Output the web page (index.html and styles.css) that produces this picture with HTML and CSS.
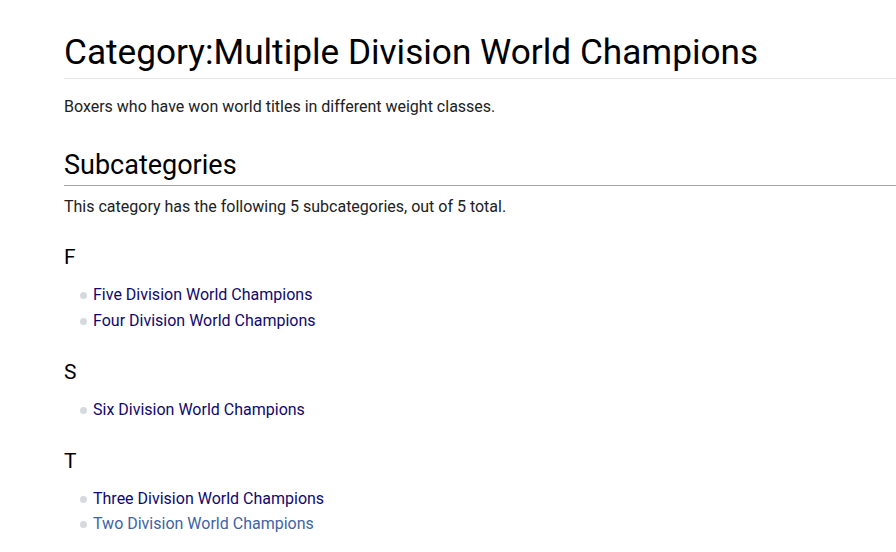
FILE: index.html
```html
<!DOCTYPE html>
<html lang="en">
<head>
<meta charset="utf-8">
<title>Category:Multiple Division World Champions</title>
<link rel="stylesheet" href="styles.css">
</head>
<body>
<main class="page">
  <h1 class="title">Category:Multiple Division World Champions</h1>
  <p class="desc">Boxers who have won world titles in different weight classes.</p>
  <h2 class="section">Subcategories</h2>
  <p class="count">This category has the following 5 subcategories, out of 5 total.</p>
  <div class="group">
    <h3 class="letter">F</h3>
    <ul class="links">
      <li><a href="#">Five Division World Champions</a></li>
      <li><a href="#">Four Division World Champions</a></li>
    </ul>
  </div>
  <div class="group">
    <h3 class="letter">S</h3>
    <ul class="links">
      <li><a href="#">Six Division World Champions</a></li>
    </ul>
  </div>
  <div class="group">
    <h3 class="letter">T</h3>
    <ul class="links">
      <li><a href="#">Three Division World Champions</a></li>
      <li class="last"><a href="#" class="new">Two Division World Champions</a></li>
    </ul>
  </div>
</main>
</body>
</html>
```
FILE: styles.css
```css
html, body {
  margin: 0;
  padding: 0;
  background: #fff;
}
body {
  font-family: Roboto, "Liberation Sans", sans-serif;
  color: #202122;
  overflow: hidden;
}
.page {
  padding: 30px 0 0 64px;
}
.title {
  font-size: 35.2px;
  font-weight: 400;
  line-height: 44px;
  margin: 0;
  padding-bottom: 4px;
  border-bottom: 1px solid #e4e6e8;
  color: #000;
}
.desc {
  font-size: 16px;
  line-height: 22px;
  margin: 17px 0 0;
}
.section {
  font-size: 27px;
  font-weight: 400;
  line-height: 34px;
  margin: 30px 0 0;
  padding-bottom: 3px;
  border-bottom: 1px solid #a2a5ab;
  color: #000;
}
.count {
  font-size: 16px;
  line-height: 22px;
  margin: 10px 0 0;
}
.letter {
  font-size: 21px;
  font-weight: 400;
  line-height: 26px;
  margin: 25px 0 0;
  color: #000;
}
.group:first-of-type .letter {
  margin-top: 26px;
}
.links {
  list-style: none;
  margin: 12px 0 0;
  padding: 0 0 0 16px;
}
.links li {
  display: flex;
  align-items: center;
  gap: 6px;
  font-size: 16px;
  line-height: 26px;
}
.links li.last {
  line-height: 24px;
}
.links li::before {
  content: "";
  width: 7px;
  height: 7px;
  border-radius: 50%;
  background: #d6d9de;
}
.links a {
  color: #10086e;
  text-decoration: none;
}
.links a.new {
  color: #3e63a6;
}
```
